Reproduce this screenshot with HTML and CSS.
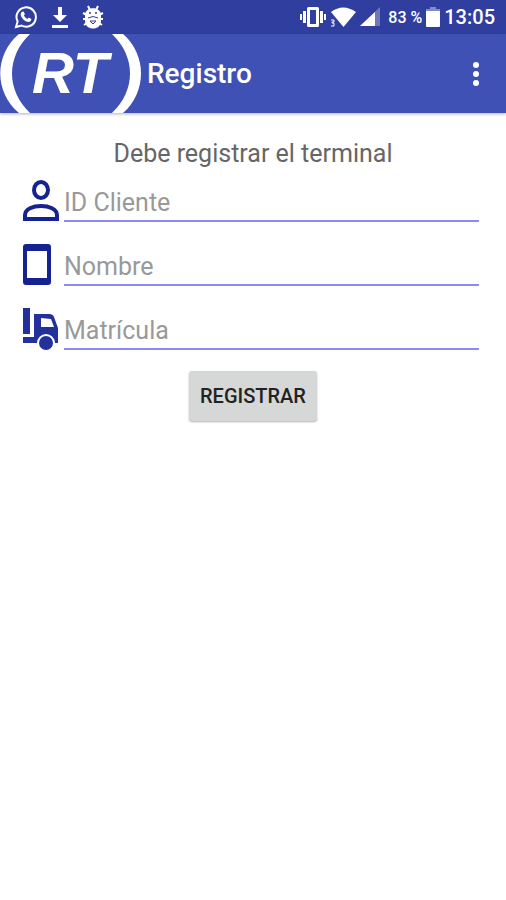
FILE: index.html
```
<!DOCTYPE html>
<html lang="es">
<head>
    <meta charset="UTF-8">
    <meta name="viewport" content="width=device-width, initial-scale=1.0">
    <title>Registro</title>
    <link rel="stylesheet" href="styles.css">
</head>
<body>

    <div class="status-bar">
        <div class="status-group notifications">
            <svg width="24" height="24" viewBox="0 0 24 24" fill="none" stroke="#fff" stroke-width="2">
                <path d="M2 22l1.600-5.500A9.700 9.700 0 1 1 7.500 20.500z"/>
                <path d="M8.200 6.800l1.500-.3 1.200 2.800-1 1.300c.8 1.500 2 2.600 3.500 3.300l1.300-1.300 2.700 1.300c0 2-1.500 3-3 3-3.500-.3-7.500-4-7.700-7.500 0-1.100.6-2 1.500-2.600z" fill="#fff" stroke="none"/>
            </svg>
            <svg width="18" height="24" viewBox="0 0 18 24" fill="#fff">
                <path d="M7 2h4v8h5l-7 7-7-7h5zM1 20h16v3H1z"/>
            </svg>
            <svg width="22" height="24" viewBox="0 0 22 24" fill="#fff">
                <path d="M6 1l2 4M16 1l-2 4M1 8l4 2M21 8l-4 2M1 14h4M21 14h-4M2 20l3-2M20 20l-3-2" stroke="#fff" stroke-width="2"/>
                <path d="M3 10c0-9 16-9 16 0v6c0 10-16 10-16 0z"/>
                <path d="M6 13q5-3 10 0M8 16h6l-3 3z" fill="none" stroke="#303f9f"/>
                <circle cx="8" cy="8" r="1" fill="#303f9f"/>
                <circle cx="14" cy="8" r="1" fill="#303f9f"/>
            </svg>
        </div>
        <div class="status-group">
            <svg width="26" height="20" viewBox="0 0 26 20" fill="#fff">
                <path d="M0 7h2v6H0zM3 4h3v12H3zM20 4h3v12h-3zM24 7h2v6h-2z"/>
                <path fill-rule="evenodd" d="M8.500 0h9Q19 0 19 1.500v17q0 1.500-1.500 1.500h-9Q7 20 7 18.500v-17Q7 0 8.500 0zM10 3v14h6V3z"/>
            </svg>
            <svg width="26" height="20" viewBox="0 0 26 20" fill="#fff">
                <path d="M1 5Q13-4 26 5L13.500 20z"/>
                <path d="M1 13h3v2H2v1h2v3H1" fill="none" stroke="#fff"/>
            </svg>
            <svg width="20" height="20" viewBox="0 0 20 20" fill="#fff">
                <path d="M20 0v19H0z" opacity=".3"/>
                <path d="M15 5v14H0z"/>
            </svg>
            <span class="battery-level">83 %</span>
            <svg width="14" height="20" viewBox="0 0 14 20" fill="#fff">
                <path d="M4 0h6v2h4v4H0V2h4z" opacity=".4"/>
                <path d="M0 4h14v15q0 1-1 1H1q-1 0-1-1z"/>
            </svg>
            <span class="clock">13:05</span>
        </div>
    </div>

    <header class="app-bar">
        <svg class="logo" width="141" height="79" viewBox="0 0 141 79" fill="#fff">
            <path d="M19 0h11C6 23 6 56 30 79H19C-6 58-6 21 19 0zM123 0h-11c24 23 24 56 0 79h11c24-21 24-58 0-79z"/>
            <text class="logo-text" x="32" y="59">RT</text>
        </svg>
        <h1>Registro</h1>
        <button class="menu-button" type="button" aria-label="Más opciones">
            <svg width="8" height="24" viewBox="0 0 8 24" fill="#fff">
                <circle cx="4" cy="3" r="3"/>
                <circle cx="4" cy="12" r="3"/>
                <circle cx="4" cy="21" r="3"/>
            </svg>
        </button>
    </header>

    <form class="register-form">
        <p class="message">Debe registrar el terminal</p>

        <div class="field">
            <label for="client-id" aria-label="ID Cliente">
                <svg width="36" height="42" viewBox="0 0 36 42" fill="none" stroke="#142391" stroke-width="4">
                    <ellipse cx="18" cy="11" rx="7" ry="8"/>
                    <path d="M2 40v-4c0-12 32-12 32 0v4z"/>
                </svg>
            </label>
            <input type="text" id="client-id" placeholder="ID Cliente">
        </div>

        <div class="field">
            <label for="name" aria-label="Nombre">
                <svg width="36" height="42" viewBox="0 0 36 42" fill="#142391">
                    <path fill-rule="evenodd" d="M3 1h22q3 0 3 3v35q0 3-3 3H3q-3 0-3-3V4q0-3 3-3zM4 8v27h20V8z"/>
                </svg>
            </label>
            <input type="text" id="name" placeholder="Nombre">
        </div>

        <div class="field">
            <label for="plate" aria-label="Matrícula">
                <svg width="36" height="43" viewBox="0 0 36 43" fill="#22319c">
                    <path d="M0 1h7v26H0z"/>
                    <path fill-rule="evenodd" d="M11 7h15q4 0 5 3l4 11v15h-3A9 9 0 0 0 14 36H0v-6h11zM18 11v9h13l-3-8z"/>
                    <circle cx="23" cy="36" r="7"/>
                </svg>
            </label>
            <input type="text" id="plate" placeholder="Matrícula">
        </div>

        <button class="submit-button" type="button">Registrar</button>
    </form>

</body>
</html>
```
FILE: styles.css
```
body {
    font-family: Roboto, sans-serif;
    margin: 0;
    background-color: #fff;
}

svg {
    display: block;
    flex: none;
}

.status-bar {
    display: flex;
    justify-content: space-between;
    align-items: center;
    height: 34px;
    padding: 0 11px 0 14px;
    background-color: #303f9f;
    color: #fff;
}

.status-group {
    display: flex;
    align-items: center;
    gap: 4px;
}

.notifications {
    gap: 13px;
}

.battery-level {
    margin-left: 4px;
    font-size: 16px;
    font-weight: 500;
}

.clock {
    font-size: 20px;
    font-weight: 500;
}

.app-bar {
    display: flex;
    align-items: center;
    height: 79px;
    background-color: #3f51b5;
    color: #fff;
    box-shadow: 0 1px 3px rgba(0, 0, 0, 0.3);
}

.logo-text {
    font: italic bold 58px "Liberation Sans", sans-serif;
}

h1 {
    flex: 1;
    margin: 0 0 0 6px;
    font-size: 28px;
    font-weight: 500;
}

.menu-button {
    padding: 12px 26px;
    border: none;
    background: none;
    cursor: pointer;
}

.register-form {
    display: flex;
    flex-direction: column;
    padding: 24px 0;
}

.message {
    margin: 0 0 8px;
    font-size: 25px;
    line-height: 34px;
    text-align: center;
    color: #666;
}

.field {
    display: flex;
    gap: 5px;
    height: 43px;
    margin: 0 27px 21px 23px;
}

.field input {
    flex: 1;
    min-width: 0;
    padding: 6px 0 0;
    border: none;
    border-bottom: 2px solid #8c89f0;
    outline: none;
    background: none;
    font-family: inherit;
    font-size: 25px;
    color: #333;
}

.field input::placeholder {
    color: #999;
}

.submit-button {
    align-self: center;
    padding: 11px;
    border: none;
    border-radius: 3px;
    background-color: #d6d7d7;
    box-shadow: 0 1px 2px rgba(0, 0, 0, 0.3);
    font-family: inherit;
    font-size: 20px;
    font-weight: 500;
    line-height: 28px;
    text-transform: uppercase;
    color: #222;
    cursor: pointer;
}
```
